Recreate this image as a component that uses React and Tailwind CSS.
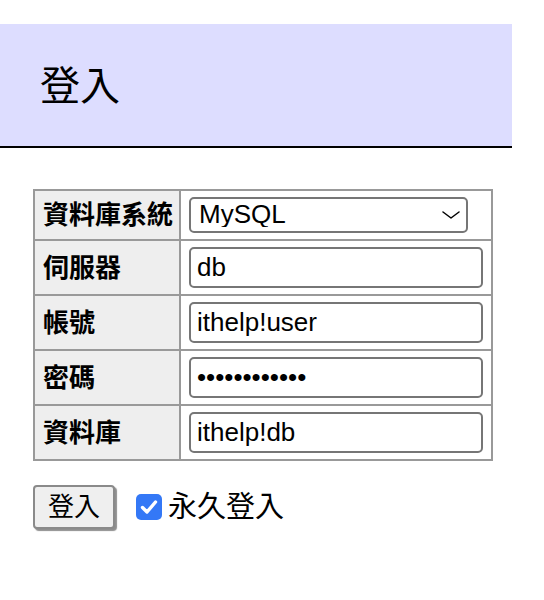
import { useState } from 'react';

const font = { fontFamily: '"Liberation Sans", Arial, "Noto Sans CJK TC", sans-serif' };

const Field = ({ label, children, first }) => (
  <div className={`flex ${first ? '' : 'border-t-2 border-[#999]'}`}>
    <div className="w-[146px] shrink-0 bg-[#eee] border-r-2 border-[#999] flex items-center pl-2 text-[26px] font-bold leading-none">
      {label}
    </div>
    <div className="flex-1 px-2 py-[6px] flex items-center">{children}</div>
  </div>
);

const inputCls =
  'w-[294px] h-[41px] border-2 border-[#767676] rounded-[5px] bg-white px-[6px] text-[26px] text-black outline-none';

export default function App() {
  const [driver, setDriver] = useState('server');
  const [server, setServer] = useState('db');
  const [user, setUser] = useState('ithelp!user');
  const [pass, setPass] = useState('ithelp!pass1');
  const [db, setDb] = useState('ithelp!db');
  const [permanent, setPermanent] = useState(true);

  return (
    <div className="min-h-[600px] bg-white text-black pt-[24px]" style={font}>
      <h2 className="w-[512px] h-[124px] bg-[#ddf] border-b-2 border-black flex items-center pl-[40px] pt-[2px] text-[40px] font-normal">
        登入
      </h2>

      <form onSubmit={(e) => e.preventDefault()}>
        <div className="ml-[33px] mt-[41px] w-[460px] border-2 border-[#999]">
          <Field label="資料庫系統" first>
            <div className="relative">
              <select
                value={driver}
                onChange={(e) => setDriver(e.target.value)}
                className="appearance-none w-[279px] h-[36px] border-2 border-[#767676] rounded-[5px] bg-white pl-[8px] pb-[3px] text-[26px] leading-none text-black outline-none"
                style={font}
              >
                <option value="server">MySQL</option>
                <option value="pgsql">PostgreSQL</option>
                <option value="sqlite">SQLite</option>
              </select>
              <svg className="absolute right-[8px] top-[14px] pointer-events-none" width="18" height="8" viewBox="0 0 18 8" fill="none">
                <path d="M1 1 L9 7 L17 1" stroke="#000" strokeWidth="1.5" strokeLinecap="round" strokeLinejoin="round" />
              </svg>
            </div>
          </Field>
          <Field label="伺服器">
            <input className={inputCls} style={font} value={server} onChange={(e) => setServer(e.target.value)} />
          </Field>
          <Field label="帳號">
            <input className={inputCls} style={font} value={user} onChange={(e) => setUser(e.target.value)} />
          </Field>
          <Field label="密碼">
            <input type="password" className={inputCls} style={font} value={pass} onChange={(e) => setPass(e.target.value)} />
          </Field>
          <Field label="資料庫">
            <input className={inputCls} style={font} value={db} onChange={(e) => setDb(e.target.value)} />
          </Field>
        </div>

        <div className="ml-[33px] mt-[24px] flex items-center">
          <button
            type="submit"
            className="w-[82px] h-[44px] bg-[#efefef] border-2 border-[#8a8a8a] rounded-[4px] shadow-[2px_2px_1px_#8f8f8f] text-[26px] leading-none"
            style={font}
          >
            登入
          </button>
          <label className="ml-[21px] flex items-center gap-[6px] text-[29px] leading-none cursor-pointer">
            <span
              onClick={() => setPermanent(!permanent)}
              className={`w-[26px] h-[26px] rounded-[5px] flex items-center justify-center ${permanent ? 'bg-[#3478f6]' : 'bg-white border-2 border-[#767676]'}`}
            >
              {permanent && (
                <svg width="22" height="22" viewBox="0 0 22 22" fill="none">
                  <path d="M4.5 11.5 L9 16 L17.5 6" stroke="#fff" strokeWidth="3.4" strokeLinecap="round" strokeLinejoin="round" />
                </svg>
              )}
            </span>
            永久登入
          </label>
        </div>
      </form>
    </div>
  );
}
